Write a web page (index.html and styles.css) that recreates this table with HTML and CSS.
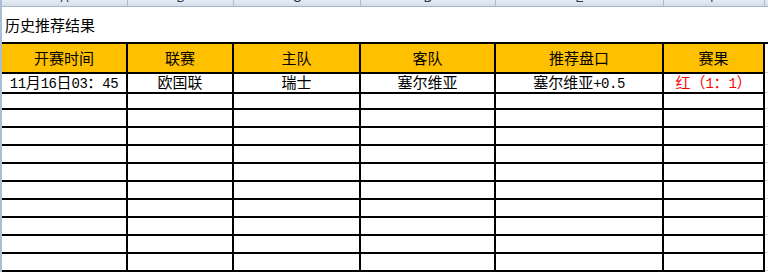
FILE: index.html
```html
<!DOCTYPE html>
<html lang="zh-CN">
<head>
    <meta charset="UTF-8">
    <meta name="viewport" content="width=device-width, initial-scale=1.0">
    <title>历史推荐结果</title>
    <link rel="stylesheet" href="styles.css">
</head>
<body>
    <div class="sheet">
        <!-- Column letters strip -->
        <div class="col-bar">
            <div><span>A</span></div>
            <div><span>B</span></div>
            <div><span>C</span></div>
            <div><span>D</span></div>
            <div><span>E</span></div>
            <div><span>F</span></div>
        </div>

        <div class="title">历史推荐结果</div>

        <!-- Results table -->
        <div class="grid">
            <div class="row head">
                <div>开赛时间</div>
                <div>联赛</div>
                <div>主队</div>
                <div>客队</div>
                <div>推荐盘口</div>
                <div>赛果</div>
            </div>
            <div class="row">
                <div><span class="num">11</span>月<span class="num">16</span>日<span class="num">03</span>：<span class="num">45</span></div>
                <div>欧国联</div>
                <div>瑞士</div>
                <div>塞尔维亚</div>
                <div>塞尔维亚<span class="num">+0.5</span></div>
                <div class="win">红（<span class="num">1</span>：<span class="num">1</span>）</div>
            </div>
            <div class="row"><div></div><div></div><div></div><div></div><div></div><div></div></div>
            <div class="row"><div></div><div></div><div></div><div></div><div></div><div></div></div>
            <div class="row"><div></div><div></div><div></div><div></div><div></div><div></div></div>
            <div class="row"><div></div><div></div><div></div><div></div><div></div><div></div></div>
            <div class="row"><div></div><div></div><div></div><div></div><div></div><div></div></div>
            <div class="row"><div></div><div></div><div></div><div></div><div></div><div></div></div>
            <div class="row"><div></div><div></div><div></div><div></div><div></div><div></div></div>
            <div class="row"><div></div><div></div><div></div><div></div><div></div><div></div></div>
            <div class="row"><div></div><div></div><div></div><div></div><div></div><div></div></div>
            <div class="row"><div></div><div></div><div></div><div></div><div></div><div></div></div>
        </div>
    </div>
</body>
</html>
```

FILE: styles.css
```css
/* Sheet frame */
body {
    margin: 0;
    height: 272px;
    overflow: hidden;
    background: #fff;
    font-family: "Noto Sans CJK SC", "Liberation Sans", sans-serif;
    color: #000;
}

.sheet {
    border-left: 2px solid #a9bdd6;
    height: 100%;
}

/* Column letters */
.col-bar {
    display: grid;
    grid-template-columns: 126px 106px 127px 135px 168px 101px 1fr;
    height: 6px;
    overflow: hidden;
    background: linear-gradient(#e6ecf4, #d5dee9);
    border-bottom: 1px solid #9eb6ce;
}

.col-bar div {
    border-right: 1px solid #aebfd4;
    text-align: center;
    overflow: hidden;
}

.col-bar span {
    display: block;
    margin-top: -9px;
    font-family: "Liberation Sans", sans-serif;
    font-size: 12px;
    line-height: 14px;
    color: #27384d;
}

.title {
    height: 35px;
    line-height: 35px;
    padding-left: 3px;
    font-size: 15px;
}

/* Results table */
.grid {
    border-top: 2px solid #000;
}

.row {
    display: grid;
    grid-template-columns: 126px 106px 127px 135px 168px 101px 1fr;
    height: 18px;
}

.row::after {
    content: "";
    border-bottom: 1px solid #d0d8e4;
    margin-bottom: 1px;
}

.row div {
    border-right: 2px solid #000;
    border-bottom: 2px solid #000;
    text-align: center;
    font-size: 15px;
    line-height: 16px;
    white-space: nowrap;
}

.row.head {
    height: 30px;
}

.row.head div {
    background: #ffc000;
    line-height: 28px;
}

/* half-width digits in the data cells */
.num {
    font-family: "Liberation Mono", monospace;
    font-size: 14px;
    letter-spacing: -0.5px;
}

.row .win {
    color: #ff0000;
}
```
